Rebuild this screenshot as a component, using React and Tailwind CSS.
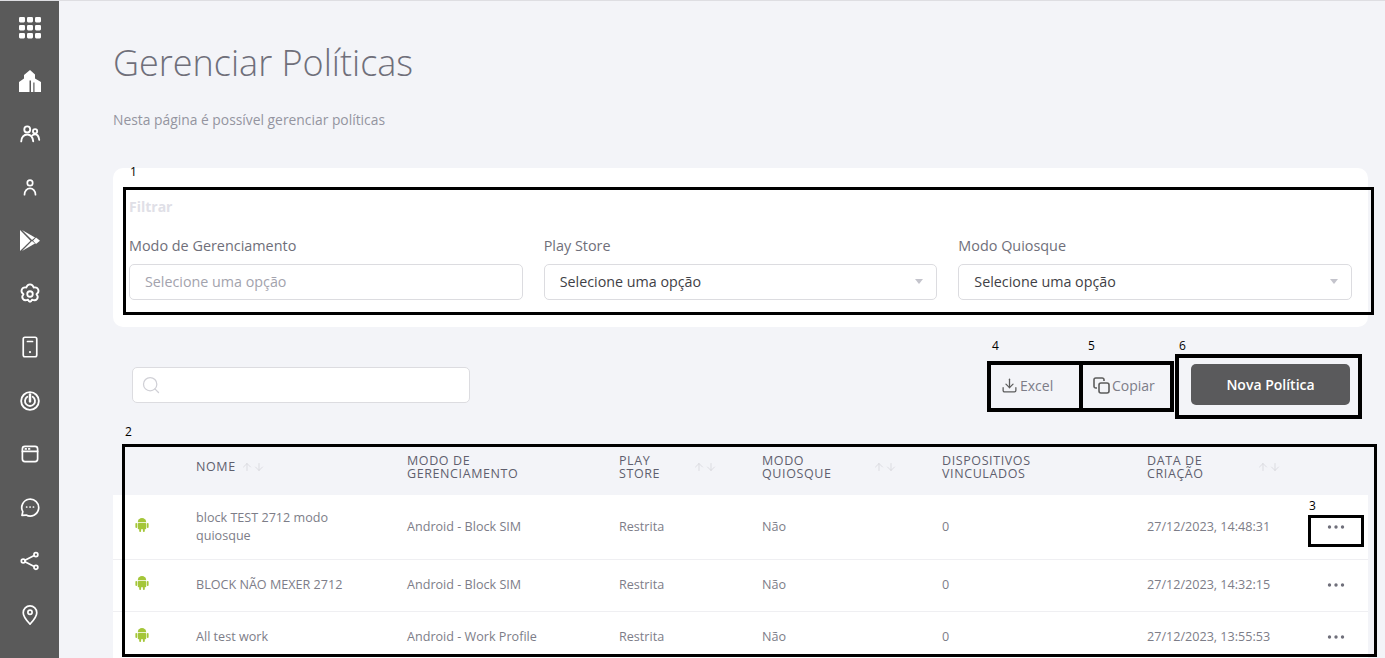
import { ArrowUp, ArrowDown, Search, Download } from "lucide-react";

const font = { fontFamily: '"Open Sans", "Noto Sans", sans-serif' };

const SideIcon = ({ size = 22, children }) => (
  <div className="flex h-[53.3px] w-full items-center justify-center text-white">
    <svg width={size} height={size} viewBox="0 0 26 26" fill="none" stroke="currentColor" strokeWidth="2" strokeLinecap="round" strokeLinejoin="round">
      {children}
    </svg>
  </div>
);

const sideIcons = [
  {
    size: 26,
    icon: (
      <g fill="currentColor" stroke="none">
        {[2, 10, 18].map((y) =>
          [2, 10, 18].map((x) => <rect key={`${x}-${y}`} x={x} y={y} width="6" height="5.4" rx="1.3" />)
        )}
      </g>
    ),
  },
  {
    size: 26,
    icon: <path fill="currentColor" stroke="none" d="M13 2l5 4.500v4L24 14v10h-6.500V14.500h-1.200V24H14V12.500h-1.500V24H2V14l5-3.500V7z" />,
  },
  {
    size: 24,
    icon: (
      <g>
        <circle cx="10" cy="8" r="3.200" />
        <circle cx="18.500" cy="10" r="2.300" />
        <path d="M3.500 21c0-4.500 3-7.500 6.500-7.500 3.500 0 6 3 6.500 7.500" />
        <path d="M15.500 14.500c1-.8 2-1.200 3-1.200 2.500 0 4 2.500 4.500 6" />
      </g>
    ),
  },
  {
    icon: (
      <g>
        <circle cx="13" cy="7" r="3.200" />
        <path d="M6.500 21c0-4.500 3-7.500 6.500-7.500s6.500 3 6.500 7.500" />
      </g>
    ),
  },
  {
    size: 26,
    icon: (
      <g fill="currentColor" stroke="none">
        <path d="M3 2l10.500 10.800L3 23z" />
        <path d="M5 2l13 7.500-3 2.500z" />
        <path d="M5 23l13-7.500-3-2.500z" />
        <path d="M19 9.500l4 3.300-4 3.300-3-3.300z" />
      </g>
    ),
  },
  {
    size: 24,
    icon: (
      <g>
        <path d="M13 2.500c2.200 0 3.500 1.600 4 3.500 2-.4 4.300.3 5 2.400.7 2-.4 3.600-2 4.800 1.300 1.500 2 3.600.5 5.300-1.400 1.700-3.700 1.300-5.300.6-.6 1.500-2 2.400-2.200 2.400s-1.600-.9-2.200-2.400c-1.600.7-3.900 1.100-5.300-.6-1.500-1.700-.8-3.800.5-5.300-1.600-1.200-2.700-2.800-2-4.800.7-2.100 3-2.800 5-2.400.5-1.900 1.800-3.500 4-3.500z" />
        <circle cx="13" cy="13" r="3" />
      </g>
    ),
  },
  {
    icon: (
      <g>
        <rect x="5" y="1.500" width="16" height="23" rx="2" />
        <path d="M10 6.500h6" />
        <circle cx="13" cy="19" r="1.300" fill="currentColor" stroke="none" />
      </g>
    ),
  },
  {
    size: 20,
    icon: (
      <g>
        <circle cx="13" cy="13" r="11.500" strokeWidth="2.400" />
        <path d="M9.500 7.500a6.500 6.500 0 1 0 7 0" strokeWidth="2.400" />
        <path d="M13 4.500v9" strokeWidth="3.200" />
      </g>
    ),
  },
  {
    icon: (
      <g>
        <rect x="4" y="4" width="18" height="18" rx="3" />
        <path d="M4 10h18" />
        <path d="M7.500 7h1M11.500 7h1" />
      </g>
    ),
  },
  {
    icon: (
      <g>
        <path d="M3.500 23l1-4.500A10 10 0 1 1 8.500 22.500z" />
        <path d="M9 13h.2M13 13h.2M17 13h.2" />
      </g>
    ),
  },
  {
    icon: (
      <g>
        <circle cx="5" cy="13" r="2.300" />
        <circle cx="20" cy="5.500" r="2.300" />
        <circle cx="20" cy="20.500" r="2.300" />
        <path d="M7 12l11-5.500M7 14l11 5.500" />
      </g>
    ),
  },
  {
    icon: (
      <g>
        <path d="M13 25c-4.500-5-8-8.500-8-13.500a8 8 0 0 1 16 0C21 16.500 17.500 20 13 25z" />
        <circle cx="13" cy="11" r="2.500" />
      </g>
    ),
  },
];

const AndroidIcon = () => (
  <svg width="14" height="16" viewBox="0 0 14 16" fill="#a4c639" className="block">
    <path d="M2.800 5.200a4.200 4.200 0 0 1 8.400 0z" />
    <rect x="2.800" y="5.900" width="8.400" height="6.400" rx="0.800" />
    <rect x="0.400" y="5.900" width="1.800" height="5" rx="0.900" />
    <rect x="11.800" y="5.900" width="1.800" height="5" rx="0.900" />
    <rect x="4.200" y="11" width="1.900" height="4" rx="0.900" />
    <rect x="7.900" y="11" width="1.900" height="4" rx="0.900" />
  </svg>
);

const Sort = ({ className = "" }) => (
  <span className={`inline-flex text-[#d4d4da] ${className}`}>
    <ArrowUp size={12} strokeWidth={1.5} />
    <ArrowDown size={12} strokeWidth={1.5} />
  </span>
);

const Caret = () => (
  <svg width="8" height="5" viewBox="0 0 8 5" className="fill-[#c4c4cc]">
    <path d="M0 0h8L4 5z" />
  </svg>
);

const Dots = () => (
  <svg width="18" height="4" viewBox="0 0 18 4" fill="#6f6f7a">
    <circle cx="2.500" cy="2" r="1.700" />
    <circle cx="9" cy="2" r="1.700" />
    <circle cx="15.500" cy="2" r="1.700" />
  </svg>
);

const CopyIcon = () => (
  <svg width="17" height="17" viewBox="0 0 17 17" fill="none" stroke="#5c5c5c" strokeWidth="1.600">
    <path d="M4 11H2.800A1.800 1.800 0 0 1 1 9.200V2.800A1.800 1.800 0 0 1 2.800 1h6.400A1.800 1.800 0 0 1 11 2.800V4" />
    <rect x="6" y="6" width="10" height="10" rx="2" />
  </svg>
);

const Box = ({ className }) => <div className={`pointer-events-none absolute border-black ${className}`} />;
const Mark = ({ className, children }) => (
  <span className={`absolute text-[12px] leading-none text-black ${className}`}>{children}</span>
);

const rows = [
  { nome: "block TEST 2712 modo quiosque", modo: "Android - Block SIM", data: "27/12/2023, 14:48:31", h: "h-[64px]" },
  { nome: "BLOCK NÃO MEXER 2712", modo: "Android - Block SIM", data: "27/12/2023, 14:32:15", h: "h-[52px]" },
  { nome: "All test work", modo: "Android - Work Profile", data: "27/12/2023, 13:55:53", h: "h-[52px]" },
];

const Field = ({ label, select }) => (
  <div className="flex-1">
    <div className="mb-[8px] text-[14.4px] leading-[20px] text-[#6f6f7a]">{label}</div>
    <div className={`flex h-[36px] items-center justify-between rounded-[5px] border border-[#dcdce0] bg-white pb-[1px] pl-[15px] pr-[13px] text-[14.3px] ${select ? "text-[#3f3f46]" : "text-[#a3a3ad]"}`}>
      <span>Selecione uma opção</span>
      {select && <Caret />}
    </div>
  </div>
);

const App = () => {
  return (
    <div className="relative flex h-screen overflow-hidden border-t border-[#dedee2] bg-[#f3f4f8]" style={font}>
      <aside className="flex w-[59px] shrink-0 flex-col bg-[#5a5a5a]">
        {sideIcons.map((item, i) => (
          <SideIcon key={i} size={item.size}>{item.icon}</SideIcon>
        ))}
      </aside>

      <main className="ml-[54px] mr-[17px] flex-1">
        <h1 className="mt-[37px] text-[36px] font-light leading-[50px] text-[#6f6f7a]">Gerenciar Políticas</h1>
        <p className="mt-[22px] text-[13.85px] leading-[20px] text-[#9494a0]">Nesta página é possível gerenciar políticas</p>

        <section className="mt-[38px] h-[159px] rounded-[10px] bg-white px-[16px] pt-[30px]">
          <div className="text-[14px] font-bold leading-[18px] text-[#e0e0e7]">Filtrar</div>
          <div className="mt-[20px] flex gap-[21px]">
            <Field label="Modo de Gerenciamento" />
            <Field label="Play Store" select />
            <Field label="Modo Quiosque" select />
          </div>
        </section>

        <div className="mt-[37px] flex h-[41px] items-center pl-[19px] pr-[18px]">
          <div className="flex h-[36px] w-[338px] items-center rounded-[5px] border border-[#dcdce0] bg-white pl-[8px]">
            <Search size={20} strokeWidth={1.5} className="text-[#d0d0d6]" />
          </div>
          <div className="ml-auto flex items-center text-[14px] text-[#7d7d88]">
            <span className="flex w-[92px] items-center gap-[2px] pl-[2px] pt-[1px]">
              <Download size={17} strokeWidth={1.8} className="text-[#5c5c5c]" />
              Excel
            </span>
            <span className="flex w-[100px] items-center gap-[2px] pl-[2px] pt-[1px]">
              <CopyIcon />
              Copiar
            </span>
            <button className="h-[41px] w-[159px] rounded-[5px] bg-[#5a5a5c] text-[14px] font-semibold text-white">Nova Política</button>
          </div>
        </div>

        <table className="mt-[39px] w-full table-fixed border-collapse text-left text-[12.6px] text-[#7d7d88]">
          <colgroup>
            <col className="w-[83px]" />
            <col className="w-[211px]" />
            <col className="w-[212px]" />
            <col className="w-[143px]" />
            <col className="w-[180px]" />
            <col className="w-[205px]" />
            <col className="w-[160px]" />
            <col />
          </colgroup>
          <thead className="text-[12.5px] leading-[13.5px] tracking-[0.6px] text-[#5f5f6e]">
            <tr className="h-[51px]">
              <th />
              <th className="pb-[5px] font-normal">
                <span className="flex items-center gap-[5px]">NOME <Sort /></span>
              </th>
              <th className="pb-[5px] font-normal">MODO DE<br />GERENCIAMENTO</th>
              <th className="pb-[5px] font-normal">
                <span className="flex items-center">
                  <span>PLAY<br />STORE</span>
                  <Sort className="ml-[33px]" />
                </span>
              </th>
              <th className="pb-[5px] font-normal">
                <span className="flex items-center">
                  <span>MODO<br />QUIOSQUE</span>
                  <Sort className="ml-[41px]" />
                </span>
              </th>
              <th className="pb-[5px] font-normal">DISPOSITIVOS<br />VINCULADOS</th>
              <th className="pb-[5px] font-normal">
                <span className="flex items-center">
                  <span>DATA DE<br />CRIAÇÃO</span>
                  <Sort className="ml-[53px]" />
                </span>
              </th>
              <th />
            </tr>
          </thead>
          <tbody className="bg-white leading-[18px]">
            {rows.map((row) => (
              <tr key={row.data} className={`${row.h} border-b border-[#efeff2]`}>
                <td className="pb-[4px] pl-[22px]"><AndroidIcon /></td>
                <td className="pr-[30px]">{row.nome}</td>
                <td>{row.modo}</td>
                <td>Restrita</td>
                <td>Não</td>
                <td>0</td>
                <td>{row.data}</td>
                <td className="pl-[20px]"><Dots /></td>
              </tr>
            ))}
          </tbody>
        </table>
      </main>

      <Mark className="left-[130px] top-[165px]">1</Mark>
      <Box className="left-[123px] top-[186px] h-[128px] w-[1251px] border-[3px]" />
      <Mark className="left-[125px] top-[425px]">2</Mark>
      <Box className="left-[122px] top-[443px] h-[213px] w-[1255px] border-[3px]" />
      <Mark className="left-[1309px] top-[499px]">3</Mark>
      <Box className="left-[1308px] top-[514px] h-[32px] w-[56px] border-[3px]" />
      <Mark className="left-[992px] top-[339px]">4</Mark>
      <Box className="left-[987px] top-[360px] h-[51px] w-[96px] border-4" />
      <Mark className="left-[1088px] top-[339px]">5</Mark>
      <Box className="left-[1079px] top-[360px] h-[51px] w-[95px] border-4" />
      <Mark className="left-[1179px] top-[339px]">6</Mark>
      <Box className="left-[1175px] top-[353px] h-[65px] w-[187px] border-4" />
    </div>
  );
};

export default App;
